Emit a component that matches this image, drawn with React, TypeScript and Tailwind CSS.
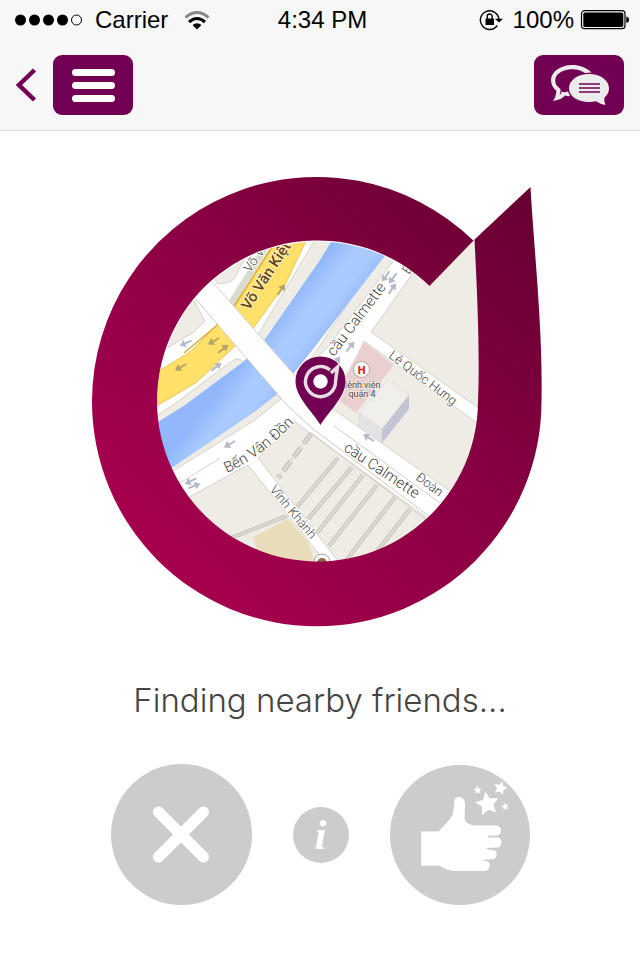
import React from "react";

const PLUM = "#720052";

function starPoints(cx: number, cy: number, r: number, turn: number) {
  const points: string[] = [];
  for (let i = 0; i < 10; i++) {
    const radius = i % 2 === 0 ? r : r * 0.48;
    const angle = ((i * 36 - 90 + turn) * Math.PI) / 180;
    points.push(`${cx + radius * Math.cos(angle)},${cy + radius * Math.sin(angle)}`);
  }
  return points.join(" ");
}

function StatusBar() {
  return (
    <div className="grid h-10 grid-cols-3 items-center pr-[10px] pl-[15px] text-2xl leading-10 text-black">
      <div className="flex items-center">
        <svg width="68" height="12" viewBox="0 0 68 12" aria-label="Signal strength">
          {[5.5, 19.5, 33.5, 47.5].map((x) => (
            <circle key={x} cx={x} cy="6" r="5.5" />
          ))}
          <circle cx="61.5" cy="6" r="5" fill="none" stroke="#000" />
        </svg>
        <span className="ml-3">Carrier</span>
        <svg className="ml-4" width="26" height="19" viewBox="0 0 26 19" aria-label="Wi-Fi">
          <g fill="none" strokeWidth="3">
            <path d="M1.500 6.500Q13-3.500 24.500 6.500" stroke="#888" />
            <path d="M5 11Q13 4 21 11" stroke="#000" />
          </g>
          <path d="M8.500 14Q13 10.500 17.500 14L13 18.500Z" />
        </svg>
      </div>
      <span className="text-center">4:34 PM</span>
      <div className="flex items-center justify-end">
        <svg width="24" height="22" viewBox="0 0 24 22" aria-label="Rotation lock">
          <path d="M18.300 16.500A9.300 9.300 0 1 1 19.900 10" fill="none" stroke="#000" strokeWidth="1.400" />
          <path d="M16 9.800H24L20 13.500Z" />
          <rect x="6.500" y="9.500" width="8.500" height="6.500" rx="0.500" />
          <path d="M8.200 10V7.500a2.500 2.500 0 0 1 5 0V10" fill="none" stroke="#000" strokeWidth="1.400" />
        </svg>
        <span className="ml-[10px]">100%</span>
        <svg className="ml-[6px]" width="50" height="20" viewBox="0 0 50 20" aria-label="Battery">
          <rect x="1.500" y="0.700" width="43.500" height="18" rx="3" fill="none" stroke="#000" strokeWidth="1.200" />
          <rect x="3.300" y="2.500" width="40" height="14.500" rx="1.800" />
          <path d="M46.300 6.500Q49 7 49 9.700T46.300 13Z" />
        </svg>
      </div>
    </div>
  );
}

function Header() {
  return (
    <header className="border-b border-[#dedede] bg-[#f7f7f7]">
      <StatusBar />
      <nav className="flex items-center px-4 pt-[15px] pb-[15px]">
        <button type="button" aria-label="Back" className="mr-4">
          <svg width="21" height="34" viewBox="0 0 21 34">
            <path d="M18.500 2L3 17L18.500 32" fill="none" stroke={PLUM} strokeWidth="4.500" />
          </svg>
        </button>
        <button type="button" aria-label="Menu" className="flex h-[60px] w-20 flex-col items-center justify-center gap-[6px] rounded-[9px] bg-[#720052]">
          <span className="h-[7px] w-[43px] rounded-full bg-white" />
          <span className="h-[7px] w-[43px] rounded-full bg-white" />
          <span className="h-[7px] w-[43px] rounded-full bg-white" />
        </button>
        <button type="button" aria-label="Messages" className="ml-auto h-[60px] w-[90px] rounded-[9px] bg-[#720052]">
          <svg width="90" height="60" viewBox="0 0 90 60">
            <path
              d="M57.500 17.500C51 11 43 9.500 36.500 10C25 11 17 17.500 17 25C17 29.500 19 33 22.500 36Q22 42 19 46Q28 44.500 31 40.500Q34 41.500 36 41L34 36.500Q30 38 28 36.500Q27 39 25.500 40Q27 37.500 26.500 34C23 31.500 21.200 29 21.200 25.500C21.200 19.500 27.500 15 36.500 14.200C42.500 13.800 47 15 51 18Z"
              fill="#ececec"
            />
            <path
              d="M55 19C44 19 35 25 35 33.300S44 47 55 47Q59 47 62 46.200Q66 49 71.500 50Q69.500 46.500 70.500 42.500C73.500 40 75 37 75 33.300C75 25 66 19 55 19Z"
              fill="#ececec"
            />
            <path d="M45 29H66M45 33H66M45 37H66" stroke={PLUM} strokeWidth="1.400" />
          </svg>
        </button>
      </nav>
    </header>
  );
}

function Arrow({ x, y, angle, color = "#b3bbc6" }: { x: number; y: number; angle: number; color?: string }) {
  return (
    <path
      d="M-6 -1H1V-4L7 0L1 4V1H-6Z"
      fill={color}
      transform={`translate(${x} ${y}) rotate(${angle})`}
    />
  );
}

function Label({ x, y, angle, size = 14, children }: { x: number; y: number; angle: number; size?: number; children: string }) {
  return (
    <text
      transform={`translate(${x} ${y}) rotate(${angle})`}
      fontSize={size}
      fontWeight="300"
      fill="#45423d"
      stroke="#fff"
      strokeWidth="2"
      paintOrder="stroke"
    >
      {children}
    </text>
  );
}

const ALLEYS = [
  "M338 458L297 507",
  "M352 467L308 519",
  "M363 475L317 533",
  "M377 485L329 546",
  "M395 497L345 562",
  "M410 509L375 554",
];

function StreetMap() {
  return (
    <g clipPath="url(#mapArea)" fontFamily="Roboto, 'Noto Sans', sans-serif">
      <rect x="150" y="235" width="335" height="335" fill="#fff" />

      <g fill="#efece5" stroke="#d6d2ca" strokeWidth="1">
        <path d="M200 260L250 245L243 262L234 279Q231 282 226 283L218 284Z" />
        <path d="M193 299L205 321L194 332L166 349L150 355V300Z" />
        <path d="M318 235L280 298L259 333Q257 338 262 345L320 262L345 235Z" />
        <path d="M150 420L173 405L228 364Q235 358 240 359L246 364L185 408L150 428Z" />
        <path d="M413 273L371 332L480 409V235H440Z" />
        <path d="M364 341L480 425V512L333 409Z" />
        <path d="M180 502L248 465L320 555V570H180Z" />
        <path d="M258 458L295 422L310 433L426 517L400 570H345Z" />
        <path d="M390 254L395 259L326 349L302 372L384 250Z" />
        <path d="M276 395L281 399L255 420L165 476L160 468Z" />
      </g>

      <path d="M336 234L320 260L263 342L243 362L185 405L150 427V482L173 467L253 413L277 394L310 353L384 257L400 234Z" fill="url(#water)" />

      <path d="M272 243L236 302L231 310L226 305L264 245Z" fill="#d8dccf" />
      <path d="M277 238L233 308L215 327L190 352L150 376V410L197 382L233 348L252 330L286 283L309 235Z" fill="#ffe069" stroke="#e5bd4c" strokeWidth="0.800" />
      <path d="M272 247L233 308L215 327L184 353" fill="none" stroke="#e0ab38" strokeWidth="1.500" />

      <path d="M188 290L204 272L315 398L300 420Z" fill="#fff" />
      <path d="M193 296L287 405L313 429L430 517M208 277L297 378M334 426L440 503M310 432L425 519" fill="none" stroke="#cfcbc3" strokeWidth="1" />
      <path d="M180 483L220 458" stroke="#d6d2ca" strokeWidth="1" />

      <path d="M364 342L394 365L356 413L334 397Z" fill="#e9d0ce" />
      <path d="M359 413L388 380L409 395L382 429Z" fill="#f1efe9" stroke="#dddbd8" strokeWidth="0.700" />
      <path d="M409 395V409L382 443V429Z" fill="#c5c4d4" />
      <path d="M359 413L382 429V443L359 428Z" fill="#e3e3e5" stroke="#d4d3da" strokeWidth="0.600" />

      <path d="M253 537L288 519L308 542L316 566H262Z" fill="#e8dcbb" />
      <path d="M231 538L287 516" stroke="#c5c1b9" strokeWidth="4" />
      <path d="M231 538L287 516" stroke="#dcd8d0" strokeWidth="2.200" />
      {ALLEYS.map((d) => (
        <g key={d}>
          <path d={d} stroke="#c5c1b9" strokeWidth="4.200" />
          <path d={d} stroke="#dedad2" strokeWidth="2.400" />
        </g>
      ))}
      <path d="M311 434L278 478" stroke="#c9c5bd" strokeWidth="5" strokeDasharray="12 5" />
      <path d="M311 434L278 478" stroke="#e2dfd8" strokeWidth="1.500" />

      <Arrow x={186} y={343} angle={157} />
      <Arrow x={214} y={341} angle={150} color="#b5a36b" />
      <Arrow x={223} y={349} angle={-38} color="#b5a36b" />
      <Arrow x={181} y={367} angle={150} color="#b5a36b" />
      <Arrow x={216} y={367} angle={-38} />
      <Arrow x={281} y={290} angle={-56} color="#b5a36b" />
      <Arrow x={230} y={444} angle={150} />
      <Arrow x={191} y={481} angle={155} />
      <Arrow x={194} y={486} angle={-22} />
      <Arrow x={386} y={276} angle={127} />
      <Arrow x={393} y={278} angle={127} />
      <Arrow x={392} y={289} angle={-56} />
      <Arrow x={350} y={347} angle={-52} />
      <Arrow x={336} y={362} angle={-52} />
      <Arrow x={369} y={438} angle={212} color="#b9b9ca" />

      <text transform="translate(249 311) rotate(-57)" fontSize="15" fontWeight="500" fill="#65430b" stroke="#fff3c5" strokeWidth="2" paintOrder="stroke">
        Võ Văn Kiệt
      </text>
      <Label x={250} y={273} angle={-55} size={13}>Võ Văn</Label>
      <Label x={334} y={357} angle={-53} size={15}>cầu Calmette</Label>
      <Label x={409} y={275} angle={-57} size={13}>Bến</Label>
      <Label x={388} y={357} angle={37} size={13}>Lê Quốc Hưng</Label>
      <Label x={343} y={450} angle={34} size={15}>cầu Calmette</Label>
      <Label x={415} y={479} angle={37} size={13}>Đoàn</Label>
      <Label x={269} y={490} angle={50} size={13}>Vĩnh Khánh</Label>
      <text fontSize="15" fontWeight="300" fill="#45423d" stroke="#fff" strokeWidth="2" paintOrder="stroke">
        <textPath href="#benVanDon">Bến Vân Đồn</textPath>
      </text>

      <circle cx="361.500" cy="369.500" r="8" fill="#fff" stroke="#aaa5a2" strokeWidth="1" />
      <text x="361.500" y="373.500" fontSize="11" fontWeight="900" fill="#d92b26" textAnchor="middle">H</text>
      <text fontSize="9" fill="#4d4a48" stroke="#f3ebe6" strokeWidth="1.500" paintOrder="stroke" textAnchor="middle">
        <tspan x="361" y="388">Bệnh viện</tspan>
        <tspan x="362" y="397">quận 4</tspan>
      </text>
      <circle cx="322" cy="562" r="8" fill="#fff" stroke="#aaa5a2" />
      <circle cx="322" cy="563" r="5" fill="#8d6f4c" />
    </g>
  );
}

function Pin() {
  return (
    <g>
      <path d="M320 426C315 414 295 400 295 381A25.500 24.500 0 0 1 346 381C346 400 326 414 320 426Z" fill="#fff" opacity="0.600" stroke="#fff" strokeWidth="1" />
      <path d="M320.500 425C312 411 295.500 397 295.500 381A25 24.500 0 0 1 345.500 381C345.500 397 329 411 320.500 425Z" fill={PLUM} />
      <path d="M330 370A15 15 0 1 0 335.500 381L337.500 367L331 373" fill="none" stroke="#e6dce3" strokeWidth="3.500" />
      <circle cx="320.500" cy="381.500" r="10" fill="none" stroke={PLUM} strokeWidth="6" />
      <circle cx="320.500" cy="381.500" r="7.200" fill="#fff" />
    </g>
  );
}

function Radar() {
  return (
    <svg className="w-full max-w-[460px]" viewBox="90 176 460 452" role="img" aria-label="Map of the area around you">
      <defs>
        <linearGradient id="ring" gradientUnits="userSpaceOnUse" x1="190" y1="550" x2="520" y2="210">
          <stop offset="0" stopColor="#a4004e" />
          <stop offset="0.500" stopColor="#8a0043" />
          <stop offset="1" stopColor="#690033" />
        </linearGradient>
        <linearGradient id="water" gradientUnits="userSpaceOnUse" x1="255" y1="345" x2="300" y2="380">
          <stop offset="0" stopColor="#92b8fb" />
          <stop offset="0.350" stopColor="#a9cafe" />
          <stop offset="0.650" stopColor="#a9cafe" />
          <stop offset="1" stopColor="#92b8fb" />
        </linearGradient>
        <clipPath id="mapArea">
          <path d="M429 286L474 239C478 290 480 350 478 385A161 161 0 1 1 429 286Z" />
        </clipPath>
        <path id="benVanDon" d="M227 473Q262 457 298 419" />
      </defs>
      <StreetMap />
      <path
        d="M474.500 239.500L473.300 240.500A224.700 224.700 0 0 0 92 401.500A224.700 224.700 0 0 0 541.500 401.500C543 330 534 250 530.500 187L474.500 239.500C477 290 480 350 478 401A160.500 160.500 0 1 1 429.500 286Z"
        fill="url(#ring)"
      />
      <Pin />
    </svg>
  );
}

function Actions() {
  return (
    <div className="mt-11 flex items-center justify-center gap-[41px]">
      <button type="button" aria-label="Skip" className="size-[141px] rounded-full bg-[#ccc]">
        <svg className="size-full" viewBox="0 0 141 141">
          <path d="M47.500 48L92.500 93M92.500 48L47.500 93" stroke="#fff" strokeWidth="11" strokeLinecap="round" />
        </svg>
      </button>
      <button type="button" aria-label="Information" className="size-14 rounded-full bg-[#ccc] font-['Liberation_Serif',serif] text-[43px] leading-[56px] font-bold text-white italic">
        i
      </button>
      <button type="button" aria-label="Like" className="size-[140px] rounded-full bg-[#ccc]">
        <svg className="size-full" viewBox="27 30 417 417" fill="#fff">
          <path d="M120 228H172L208 188Q218 175 218 140Q219 125 233 125Q248 126 251 145Q250 160 249 190Q252 208 280 210H345Q357 213 358 225Q357 238 345 240H320V246H348Q360 250 359 262Q357 275 345 276L316 277V282L335 283Q346 286 345 297Q343 309 330 311L306 312V316H315Q325 320 324 330Q322 346 308 346H220Q195 344 176 330H120Z" />
          <polygon points={starPoints(317, 146, 37, -10)} />
          <polygon points={starPoints(356, 99, 22, 15)} />
          <polygon points={starPoints(288, 105, 13, -5)} />
          <polygon points={starPoints(370, 154, 12, -15)} />
        </svg>
      </button>
    </div>
  );
}

export default function App() {
  return (
    <div className="min-h-screen bg-white font-['Liberation_Sans',Arial,sans-serif]">
      <Header />
      <main className="flex flex-col items-center pt-[45px] pb-[55px]">
        <Radar />
        <h1 className="mt-[52px] font-['Inter','Liberation_Sans',sans-serif] text-[33px] leading-10 font-light text-[#444]">Finding nearby friends...</h1>
        <Actions />
      </main>
    </div>
  );
}
